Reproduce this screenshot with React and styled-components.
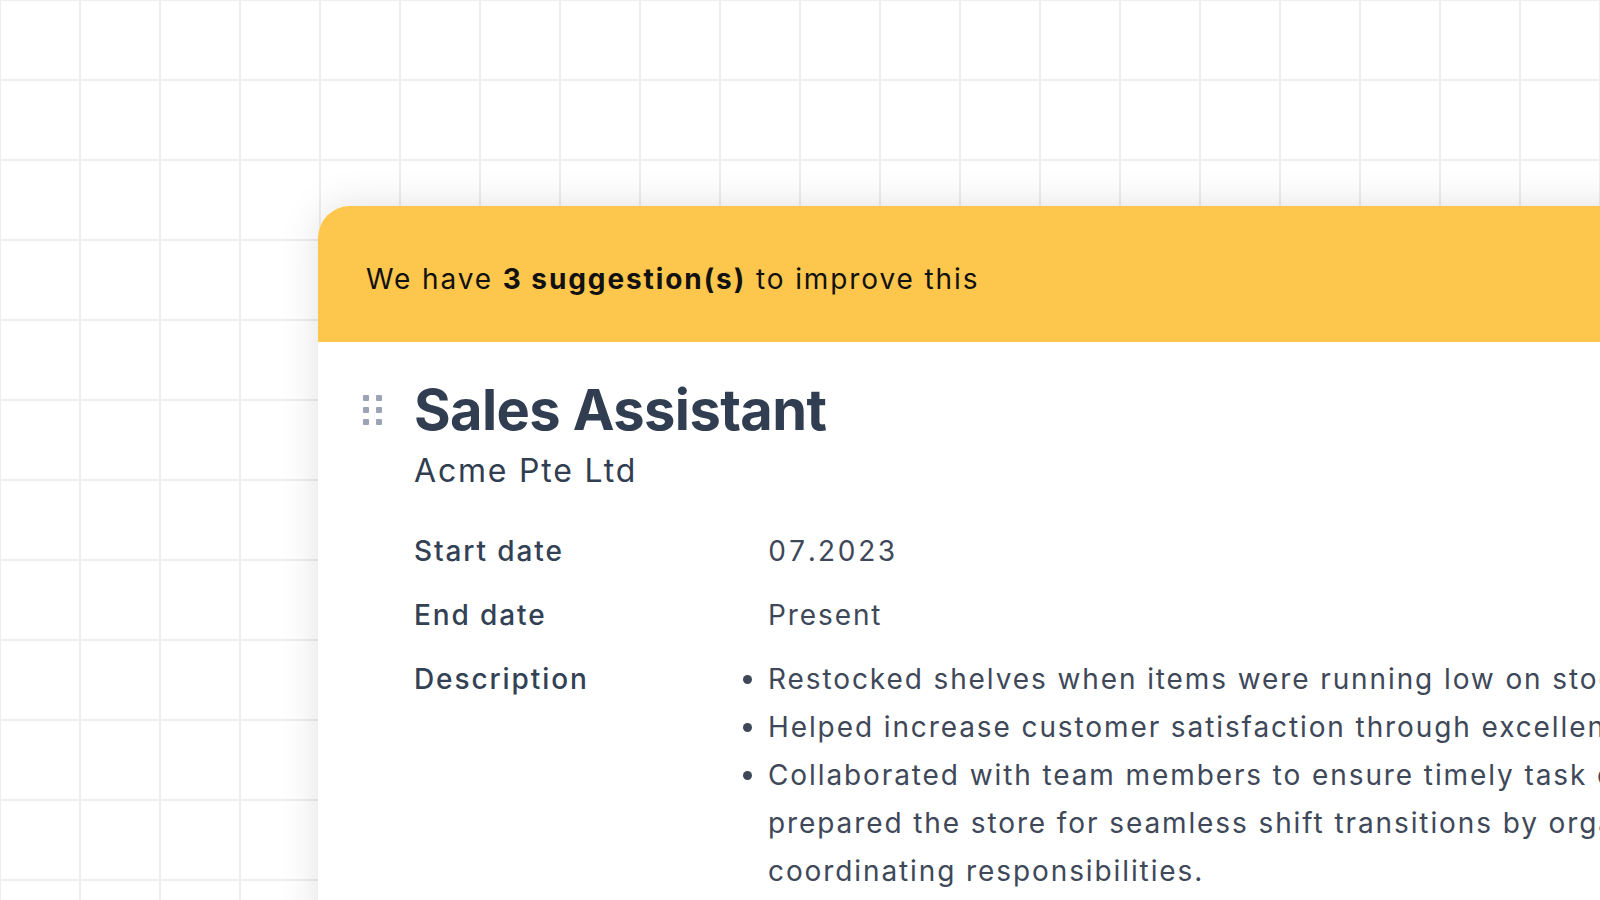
import React from 'react';
import styled, { createGlobalStyle } from 'styled-components';

const GlobalStyle = createGlobalStyle`
	html, body {
		margin: 0;
		padding: 0;
		width: 100%;
		height: 100%;
		overflow: hidden;
	}
	body {
		font-family: Inter, "Noto Sans", sans-serif;
		background-color: #ffffff;
		background-image:
			linear-gradient(to right, #eeeeee 0, #eeeeee 2px, transparent 2px),
			linear-gradient(to bottom, #eeeeee 0, #eeeeee 2px, transparent 2px);
		background-size: 80px 80px;
		background-position: -1px -1px;
	}
`;

const Page = styled.div`
	width: 1600px;
	height: 900px;
	overflow: hidden;
	padding: 206px 0 0 318px;
	box-sizing: border-box;
`;

const Card = styled.div`
	width: 1600px;
	min-height: 900px;
	background: #ffffff;
	border-radius: 32px 32px 0 0;
	box-shadow: 0 0 40px rgba(0, 0, 0, 0.12);
	overflow: hidden;
`;

const Banner = styled.div`
	height: 136px;
	box-sizing: border-box;
	padding: 10px 48px 0;
	display: flex;
	align-items: center;
	background: #fdc64c;
	color: #111111;
	font-size: 28px;
	letter-spacing: 1.9px;
	b {
		font-weight: 700;
	}
`;

const Body = styled.div`
	padding: 36px 0 0 45px;
`;

const TitleRow = styled.div`
	display: flex;
	align-items: center;
	gap: 32px;
`;

const Handle = styled.div`
	display: grid;
	grid-template-columns: repeat(2, 6px);
	grid-auto-rows: 6px;
	column-gap: 7px;
	row-gap: 6px;
	span {
		background: #9ca3b4;
		border-radius: 1px;
	}
`;

const Title = styled.h1`
	margin: 0;
	font-size: 56px;
	line-height: 64px;
	font-weight: 700;
	letter-spacing: -0.6px;
	color: #313d50;
`;

const Company = styled.div`
	margin: 9px 0 0 51px;
	font-size: 32px;
	line-height: 40px;
	letter-spacing: 1.8px;
	color: #313d50;
`;

const Details = styled.div`
	margin: 36px 0 0 51px;
	display: grid;
	grid-template-columns: 354px 1100px;
	row-gap: 16px;
	font-size: 28px;
	line-height: 48px;
	letter-spacing: 1.9px;
`;

const Label = styled.div`
	font-weight: 500;
	color: #334155;
`;

const Value = styled.div`
	color: #3e4859;
	font-variant-numeric: tabular-nums;
`;

const Bullets = styled.ul`
	margin: 0;
	padding: 0;
	list-style: disc outside;
	color: #3e4859;
`;

export default function App() {
	return (
		<>
			<GlobalStyle />
			<Page>
				<Card>
					<Banner>
						<span>We have <b>3 suggestion(s)</b> to improve this</span>
					</Banner>
					<Body>
						<TitleRow>
							<Handle>
								{[0, 1, 2, 3, 4, 5].map((i) => <span key={i} />)}
							</Handle>
							<Title>Sales Assistant</Title>
						</TitleRow>
						<Company>Acme Pte Ltd</Company>
						<Details>
							<Label>Start date</Label>
							<Value>07.2023</Value>
							<Label>End date</Label>
							<Value>Present</Value>
							<Label>Description</Label>
							<Bullets>
								<li>Restocked shelves when items were running low on stock.</li>
								<li>Helped increase customer satisfaction through excellent service.</li>
								<li>Collaborated with team members to ensure timely task completion and prepared the store for seamless shift transitions by organizing and coordinating responsibilities.</li>
							</Bullets>
						</Details>
					</Body>
				</Card>
			</Page>
		</>
	);
}
